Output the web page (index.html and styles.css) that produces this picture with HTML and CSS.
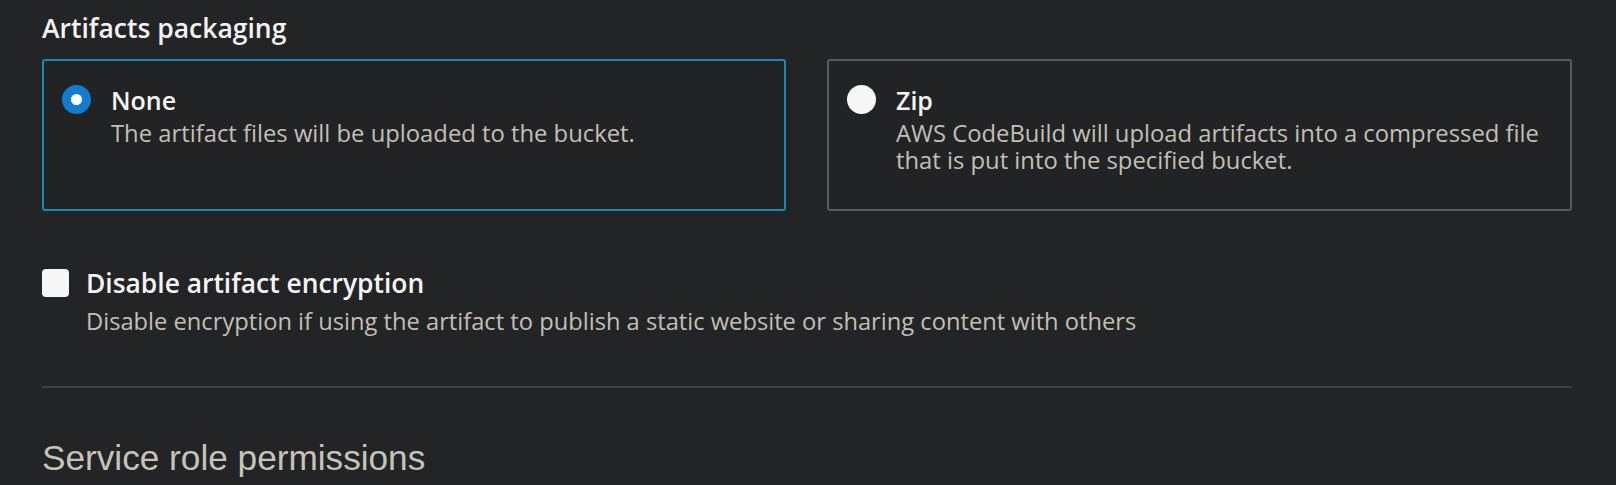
FILE: index.html
```html
<!DOCTYPE html>
<html lang="en">
<head>
<meta charset="utf-8">
<title>Artifacts packaging</title>
<link rel="stylesheet" href="styles.css">
</head>
<body>
<main class="page">
  <h2 class="group-label">Artifacts packaging</h2>
  <div class="tiles">
    <label class="tile tile--selected">
      <span class="radio radio--checked"><span class="radio-dot"></span></span>
      <span class="tile-text">
        <span class="tile-title">None</span>
        <span class="tile-desc">The artifact files will be uploaded to the bucket.</span>
      </span>
    </label>
    <label class="tile">
      <span class="radio"></span>
      <span class="tile-text">
        <span class="tile-title">Zip</span>
        <span class="tile-desc">AWS CodeBuild will upload artifacts into a compressed file<br>that is put into the specified bucket.</span>
      </span>
    </label>
  </div>

  <label class="check-row">
    <span class="checkbox"></span>
    <span class="check-text">
      <span class="check-title">Disable artifact encryption</span>
      <span class="check-desc">Disable encryption if using the artifact to publish a static website or sharing content with others</span>
    </span>
  </label>

  <hr class="divider">

  <h3 class="section-title">Service role permissions</h3>
</main>
</body>
</html>
```

FILE: styles.css
```css
html, body {
  margin: 0;
  padding: 0;
  background: #232426;
}

body {
  font-family: "Open Sans", "Noto Sans", sans-serif;
  color: #f2f2f2;
  width: 1616px;
  height: 485px;
  overflow: hidden;
}

.page {
  padding: 10px 44px 0 42px;
  width: 1530px;
}

.group-label {
  margin: 0;
  font-size: 26.5px;
  line-height: 36px;
  font-weight: 600;
  color: #f3f3f3;
}

.tiles {
  margin-top: 13px;
  display: grid;
  grid-template-columns: 744px 745px;
  column-gap: 41px;
}

.tile {
  display: flex;
  align-items: flex-start;
  gap: 20px;
  border: 2px solid #595a5c;
  border-radius: 3px;
  padding: 23px 18px 35px 18px;
  background: #222325;
}

.tile--selected {
  border-color: #1b88b4;
}

.radio {
  flex: none;
  width: 29px;
  height: 29px;
  margin-top: 1px;
  border-radius: 50%;
  background: #f7f7f7;
  box-sizing: border-box;
  display: flex;
  align-items: center;
  justify-content: center;
}

.radio--checked {
  background: #137bd0;
}

.radio-dot {
  width: 11px;
  height: 11px;
  border-radius: 50%;
  background: #ffffff;
}

.tile-text {
  display: flex;
  flex-direction: column;
}

.tile-title {
  font-size: 25px;
  line-height: 32px;
  font-weight: 600;
  color: #f5f5f5;
}

.tile-desc {
  margin-top: 4px;
  font-size: 23.8px;
  line-height: 27px;
  color: #c3bfb6;
}

.check-row {
  margin-top: 56px;
  display: flex;
  align-items: flex-start;
  gap: 17px;
}

.checkbox {
  flex: none;
  width: 27px;
  height: 28px;
  margin-top: 2px;
  border-radius: 4px;
  background: #f7f7f7;
}

.check-text {
  display: flex;
  flex-direction: column;
}

.check-title {
  font-size: 26.4px;
  line-height: 32px;
  font-weight: 600;
  color: #f5f5f5;
}

.check-desc {
  margin-top: 9px;
  font-size: 23.7px;
  line-height: 27px;
  color: #c3bfb6;
}

.divider {
  margin: 51px 0 0 0;
  border: none;
  height: 2px;
  background: #3e3f41;
}

.section-title {
  margin: 50px 0 0 0;
  font-family: "Liberation Sans", Arial, sans-serif;
  font-size: 35.2px;
  line-height: 40px;
  font-weight: 400;
  color: #c6c3bb;
}
```
